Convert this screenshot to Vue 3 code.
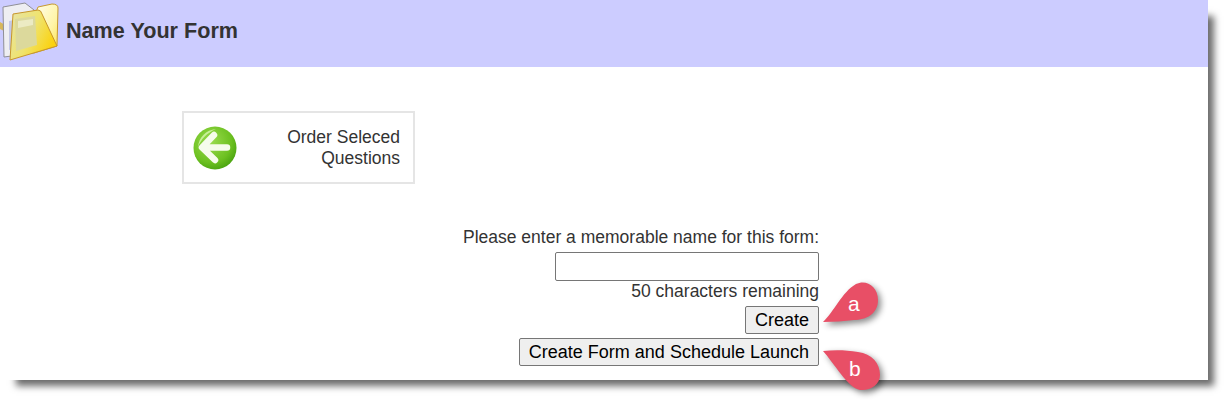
<script setup>
const titulo = 'Name Your Form'
const restantes = 50
</script>

<template>
  <div class="tela">
    <div class="pagina">
      <header class="topo">
        <svg class="pasta" viewBox="0 0 59 61" aria-hidden="true">
          <defs>
            <linearGradient id="fundoPasta" x1="0" y1="0" x2="1" y2="1">
              <stop offset="0" stop-color="#fffef0" />
              <stop offset="0.6" stop-color="#fff5a8" />
              <stop offset="1" stop-color="#fce04a" />
            </linearGradient>
            <linearGradient id="frentePasta" x1="0" y1="0" x2="1" y2="0.5">
              <stop offset="0" stop-color="#e6e4a8" />
              <stop offset="0.55" stop-color="#efe36e" />
              <stop offset="1" stop-color="#fbd20e" />
            </linearGradient>
          </defs>
          <path d="M0 21 L5 24 L4 30 L0 28 Z" fill="#d8b85a" />
          <path d="M3 6 L25 2 L34 9 L34 52 L4 56 Z" fill="#eeeef2" stroke="#8f8f96" />
          <path d="M9 20 L14 19 L14 48 L9 49 Z" fill="#c4c8e6" />
          <path d="M36 11 L38 6 L52 3 Q58 3 58 7 L57 45 L34 52 Z" fill="url(#fundoPasta)" stroke="#c79a2e" />
          <path d="M13 13 L38 9 Q41 9 42 13 L57 45 L10 59 Z" fill="url(#frentePasta)" stroke="#c8962a" />
          <path d="M15 18 L35 15 L37 44 L16 50 Z" fill="#dcd99c" />
          <path d="M18 20 L33 18 L33 24 L18 27 Z" fill="#ecebc4" />
        </svg>
        <h1>{{ titulo }}</h1>
      </header>

      <main class="conteudo">
        <div class="voltar">
          <svg class="seta" viewBox="0 0 44 44" aria-hidden="true">
            <defs>
              <radialGradient id="bola" cx="0.4" cy="0.35" r="0.75">
                <stop offset="0" stop-color="#9bdc50" />
                <stop offset="0.65" stop-color="#6cc020" />
                <stop offset="1" stop-color="#3f9a0c" />
              </radialGradient>
            </defs>
            <circle cx="22" cy="22" r="21.5" fill="url(#bola)" />
            <path d="M5 21 C6 11 13 4 23 3 C14 7 8 13 5 21 Z" fill="#c8f098" />
            <path d="M21 9 L9 21.5 L22 34 M10 21.5 H34" fill="none" stroke="#f6fcec" stroke-width="6.5" stroke-linecap="round" stroke-linejoin="round" />
          </svg>
          <span class="voltar-texto">Order Seleced Questions</span>
        </div>

        <form class="formulario" @submit.prevent>
          <label for="nomeForm">Please enter a memorable name for this form:</label>
          <input id="nomeForm" type="text" maxlength="50" />
          <span class="restantes">{{ restantes }} characters remaining</span>
          <button class="btn-criar" type="button">Create</button>
          <button type="button">Create Form and Schedule Launch</button>
        </form>
      </main>
    </div>

    <svg class="balao balao-a" viewBox="0 0 60 50" aria-hidden="true">
      <path d="M1 42 C12 32 20 12 34 4 C44 -1 56 6 56 20 C56 34 44 40 32 40 C22 41 12 42 1 42 Z" fill="#e84f66" />
    </svg>
    <span class="letra letra-a">a</span>
    <svg class="balao balao-b" viewBox="0 0 60 50" aria-hidden="true">
      <path d="M1 2 C12 1 24 1 36 3 C50 5 58 14 58 26 C58 36 48 42 38 41 C26 39 12 14 1 2 Z" fill="#e84f66" />
    </svg>
    <span class="letra letra-b">b</span>
  </div>
</template>

<style scoped>
.tela {
  position: relative;
  width: 1231px;
  height: 403px;
  background: white;
  overflow: hidden;
  font-family: "Liberation Sans", Arial, sans-serif;
  color: #333;
}

.pagina {
  width: 1208px;
  height: 380px;
  background: white;
  box-shadow: 11px 11px 7px -5px rgba(0, 0, 0, 0.58);
}

.topo {
  height: 67px;
  background: #ccccff;
  display: flex;
  align-items: flex-start;
  gap: 7px;
}

.pasta {
  width: 59px;
  height: 61px;
  margin-top: 1px;
  flex: none;
}

.topo h1 {
  margin: 18px 0 0;
  font-size: 21.6px;
  line-height: 26px;
  font-weight: 700;
}

.conteudo {
  padding: 44px 0 0 182px;
}

.voltar {
  box-sizing: border-box;
  width: 233px;
  height: 73px;
  border: 2px solid #e5e5e5;
  padding: 0 13px 0 9px;
  display: flex;
  align-items: center;
  justify-content: space-between;
}

.seta {
  width: 44px;
  height: 44px;
  flex: none;
}

.voltar-texto {
  width: 130px;
  text-align: right;
  font-size: 17.5px;
  line-height: 21px;
}

.formulario {
  width: 637px;
  margin-top: 43px;
  display: flex;
  flex-direction: column;
  align-items: flex-end;
  font-size: 17.5px;
  line-height: 21px;
}

.formulario input {
  box-sizing: border-box;
  width: 264px;
  height: 29px;
  margin-top: 4px;
  border: 1px solid #767676;
  border-radius: 2px;
  background: white;
  padding: 1px 2px;
}

.restantes {
  line-height: 20px;
}

.formulario button {
  box-sizing: border-box;
  height: 28px;
  margin-top: 5px;
  padding: 0 9px;
  border: 1px solid #767676;
  border-radius: 2px;
  background: #efefef;
  color: black;
  font-family: inherit;
  font-size: 18px;
}

.formulario .btn-criar {
  margin-bottom: -1px;
}

.balao {
  position: absolute;
  width: 60px;
  height: 50px;
  filter: drop-shadow(3px 3px 3px rgba(0, 0, 0, 0.45));
}

.balao-a {
  left: 822px;
  top: 280px;
}

.balao-b {
  left: 822px;
  top: 349px;
}

.letra {
  position: absolute;
  color: white;
  font-size: 21px;
  line-height: 24px;
}

.letra-a {
  left: 848px;
  top: 292px;
}

.letra-b {
  left: 849px;
  top: 357px;
}
</style>
